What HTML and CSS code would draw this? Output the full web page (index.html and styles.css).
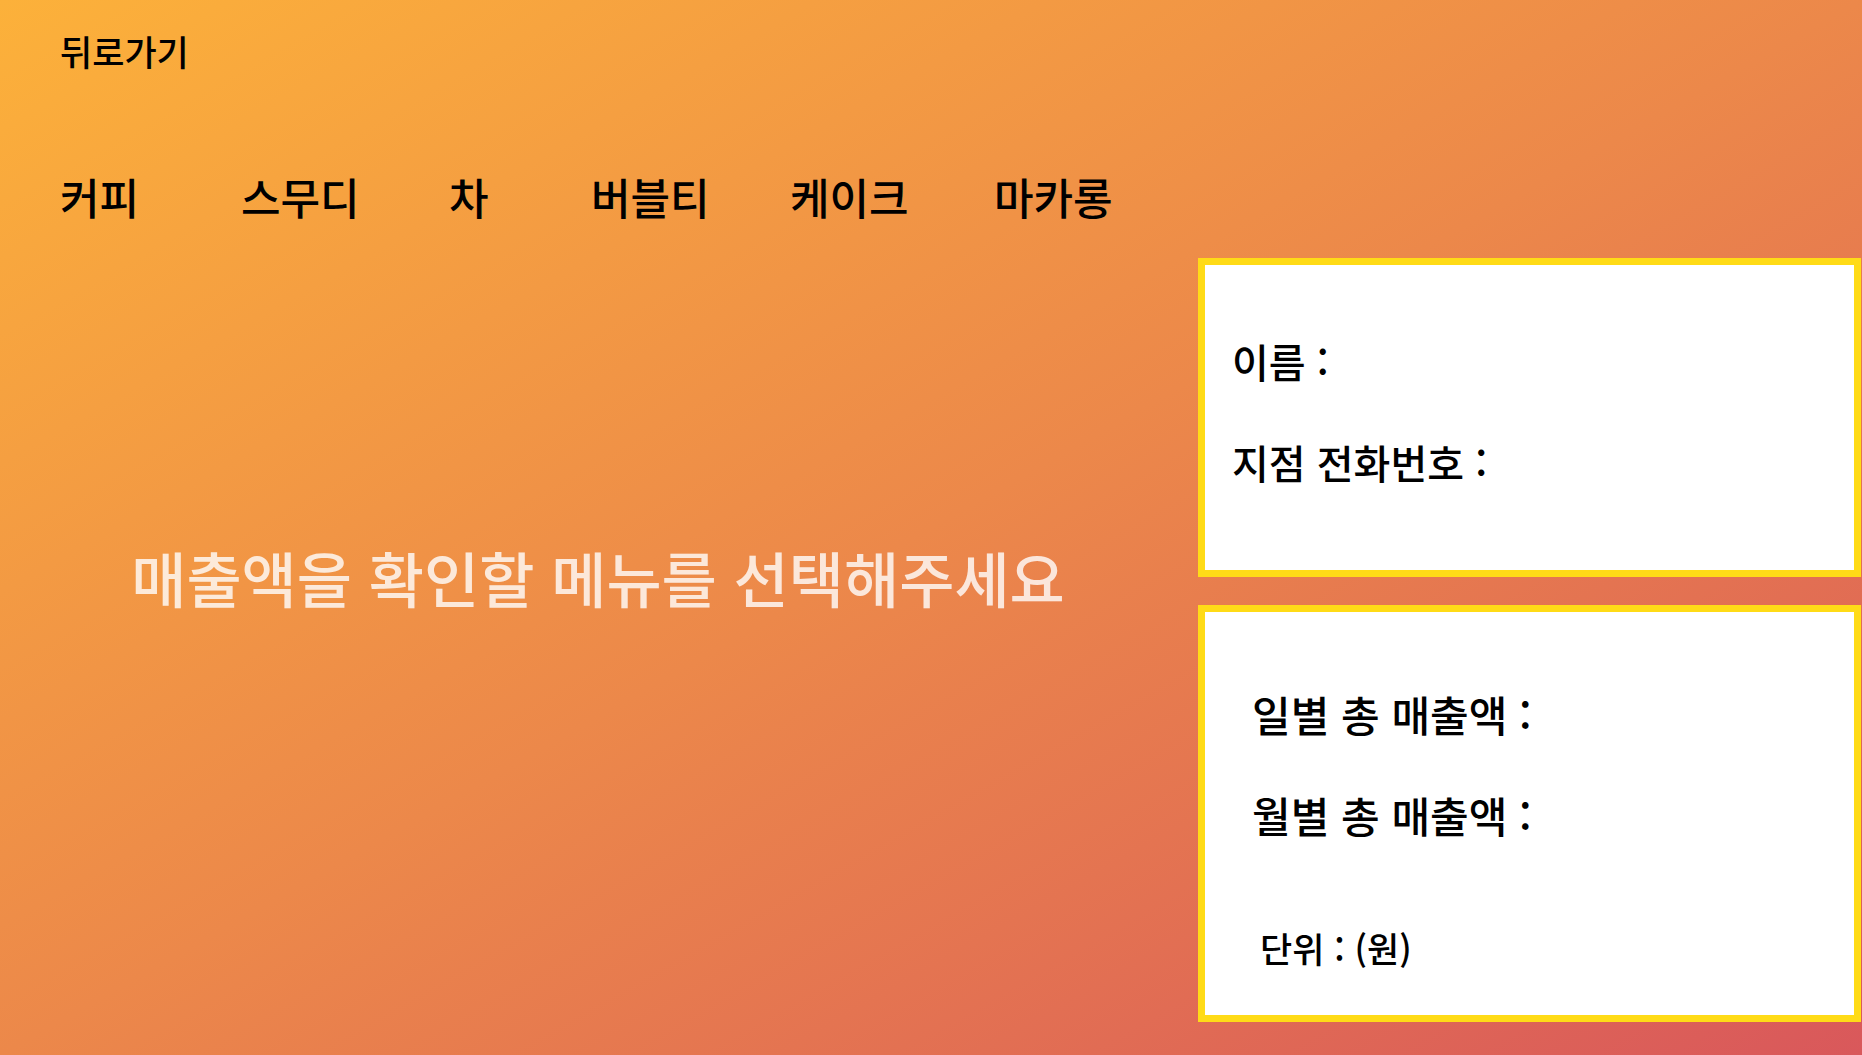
FILE: index.html
```html
<!DOCTYPE html>
<html lang="ko">
<head>
<meta charset="utf-8">
<meta name="viewport" content="width=device-width, initial-scale=1">
<title>매출액 확인</title>
<link rel="stylesheet" href="styles.css">
</head>
<body>
<header class="top">
  <a class="back" href="#">뒤로가기</a>
  <nav class="menu" aria-label="메뉴">
    <button type="button" class="menu-item">커피</button>
    <button type="button" class="menu-item">스무디</button>
    <button type="button" class="menu-item">차</button>
    <button type="button" class="menu-item">버블티</button>
    <button type="button" class="menu-item">케이크</button>
    <button type="button" class="menu-item">마카롱</button>
  </nav>
</header>
<main class="content">
  <p class="message">매출액을 확인할 메뉴를 선택해주세요</p>
  <aside class="panels">
    <section class="panel branch">
      <p class="line">이름 :</p>
      <p class="line">지점 전화번호 :</p>
    </section>
    <section class="panel sales">
      <p class="line total">일별 총 매출액 :</p>
      <p class="line total">월별 총 매출액 :</p>
      <p class="unit">단위 : (원)</p>
    </section>
  </aside>
</main>
</body>
</html>
```
FILE: styles.css
```css
* {
  box-sizing: border-box;
}

body {
  margin: 0;
  min-height: 100vh;
  display: flex;
  flex-direction: column;
  background: linear-gradient(to bottom right, #fcb13a, #ec884a 50%, #d9585b);
  color: #000;
  font-family: "Noto Sans CJK KR", sans-serif;
  font-weight: 500;
}

p {
  margin: 0;
}

.top {
  padding: 27px 60px 0;
}

.back {
  display: block;
  width: max-content;
  color: inherit;
  font-size: 35px;
  line-height: 48px;
  text-decoration: none;
}

.menu {
  display: grid;
  grid-template-columns: 181px 208px 142px 199px 204px max-content;
  margin-top: 91px;
}

.menu-item {
  justify-self: start;
  padding: 0;
  border: 0;
  background: none;
  color: inherit;
  font: inherit;
  font-size: 43px;
  line-height: 60px;
  cursor: pointer;
}

.content {
  flex: 1;
  display: grid;
  grid-template-columns: 1fr 663px;
  margin-top: 32px;
  padding: 0 1px 33px 0;
}

.message {
  padding: 275px 2px 0 0;
  text-align: center;
  color: rgba(255, 255, 255, 0.8);
  font-size: 60px;
  line-height: 88px;
}

.panels {
  display: flex;
  flex-direction: column;
  gap: 28px;
}

.panel {
  display: flex;
  flex-direction: column;
  border: 7px solid #ffdb17;
  background: #fff;
}

.branch {
  gap: 41px;
  padding: 66px 27px 78px;
}

.sales {
  flex: 1;
  gap: 41px;
  padding: 72px 47px 43px;
}

.line {
  font-size: 40px;
  line-height: 60px;
}

.total {
  font-size: 42px;
}

.unit {
  margin-top: auto;
  padding-left: 8px;
  font-size: 35px;
  line-height: 48px;
}
```
